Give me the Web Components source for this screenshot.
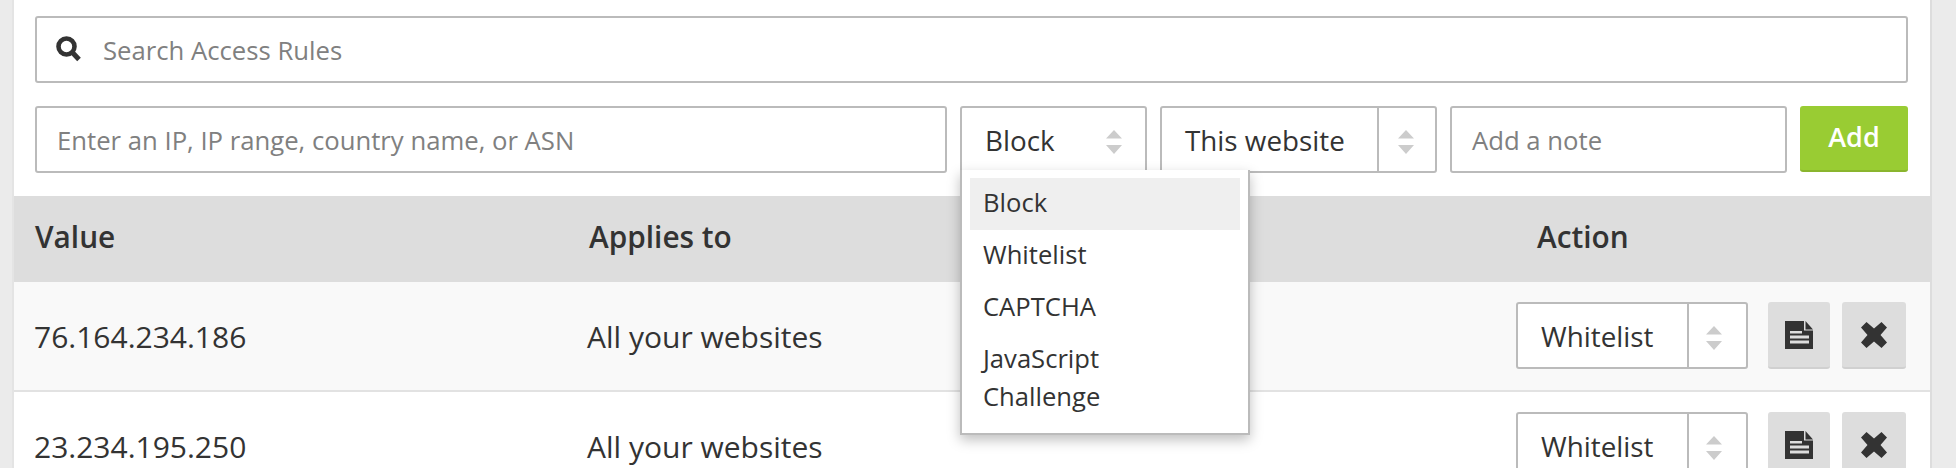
<!DOCTYPE html>
<html lang="en">
<head>
<meta charset="UTF-8">
<title>Access Rules</title>
<style>
  html, body { margin: 0; padding: 0; height: 468px; overflow: hidden; background: #ebebeb; }
  body { font-family: "Open Sans", "Liberation Sans", sans-serif; color: #333; }
</style>
</head>
<body>
<rules-page></rules-page>

<template id="textBoxTpl">
  <style>
    :host { display: flex; align-items: center; box-sizing: border-box; height: 67px; background: #fff; border: 2px solid #bbb; border-radius: 3px; font-size: 25.7px; color: #808080; padding: 2px 0 0 20px; }
    :host([search]) { padding-left: 19px; }
    svg { width: 26px; height: 26px; margin: -4px 21px 0 0; display: none; }
    :host([search]) svg { display: block; }
  </style>
  <svg viewBox="0 0 26 26"><circle cx="10.5" cy="10.5" r="8" fill="none" stroke="#333" stroke-width="4.6"/><path d="M16 16l7 7.5" fill="none" stroke="#333" stroke-width="5"/></svg>
  <slot></slot>
</template>

<template id="selectBoxTpl">
  <style>
    :host { display: flex; box-sizing: border-box; height: 67px; background: #fff; border: 2px solid #bbb; border-radius: 3px; font-size: 27.8px; color: #333; --arrow-w: 63px; }
    :host([split]) { --arrow-w: 58px; }
    :host([small]) { --arrow-w: 59px; }
    .label { flex: 1; display: flex; align-items: center; padding-left: 23px; }
    .arrows { display: flex; align-items: center; justify-content: center; box-sizing: border-box; width: var(--arrow-w); padding: 5px 0 0; }
    :host([split]) .arrows { border-left: 2px solid #bbb; padding-right: 2px; }
    :host([small]) .arrows { padding-right: 7px; }
    svg { width: 16px; height: 24px; fill: #ccc; }
  </style>
  <div class="label"><slot></slot></div>
  <div class="arrows"><svg viewBox="0 0 16 24"><path d="M8 0l8 8.500H0zM0 15h16l-8 9z"/></svg></div>
</template>

<template id="dropMenuTpl">
  <style>
    :host { display: block; position: absolute; left: 0; top: 64px; width: 290px; box-sizing: border-box; background: #fff; border: 2px solid #bbb; border-top: 0; padding: 8px 8px 9px; box-shadow: 0 5px 12px rgba(0,0,0,.25); font-size: 25.6px; color: #333; z-index: 5; }
  </style>
  <slot></slot>
</template>

<template id="dropItemTpl">
  <style>
    :host { display: block; padding: 6px 40px 8px 13px; line-height: 38px; }
    :host([active]) { background: #efefef; }
  </style>
  <slot></slot>
</template>

<template id="iconBtnTpl">
  <style>
    :host { display: flex; align-items: center; justify-content: center; box-sizing: border-box; height: 67px; background: #ddd; border-bottom: 2px solid #d0d0d0; border-radius: 3px; }
  </style>
  <slot></slot>
</template>

<template id="ruleRowTpl">
  <style>
    :host { display: grid; grid-template-columns: 553px 929px 1fr; align-items: center; box-sizing: border-box; height: 110px; padding: 0 24px 0 20px; border-bottom: 2px solid #e2e2e2; font-size: 30px; color: #333; }
    :host([shade]) { background: #f9f9f9; }
    .acts { display: flex; gap: 12px; margin-top: -1px; }
    select-box { width: 232px; margin-right: 8px; }
    icon-btn { width: 62px; }
    icon-btn + icon-btn { width: 64px; }
  </style>
  <div><slot name="value"></slot></div>
  <div><slot name="applies"></slot></div>
  <div class="acts">
    <select-box split small>Whitelist</select-box>
    <icon-btn><svg viewBox="0 0 28 28" width="28" height="28" fill="#333"><path fill-rule="evenodd" d="M0 0h19v9.500h9V28H0zM5 10v2.500h12V10zM5 14.500v3h19v-3zM5 19.500v3h19v-3z"/><path d="M20.500 0l7.500 8.500h-7.500z"/></svg></icon-btn>
    <icon-btn><svg viewBox="0 0 26 26" width="26" height="26" fill="#333"><path d="M5.500 0L13 6.500 20.500 0 26 5.500 19.500 13l6.500 7.500-5.500 5.500L13 19.500 5.500 26 0 20.500 6.500 13 0 5.500z"/></svg></icon-btn>
  </div>
</template>

<template id="tableHeadTpl">
  <style>
    :host { display: grid; grid-template-columns: 554px 948px 1fr; align-items: center; box-sizing: border-box; height: 86px; padding: 0 0 6px 21px; background: #ddd; font-size: 29.8px; font-weight: 600; color: #333; }
  </style>
  <slot></slot>
</template>

<template id="rulesPageTpl">
  <style>
    :host { display: block; box-sizing: border-box; width: 1920px; height: 468px; margin-left: 12px; background: #fff; border-left: 2px solid #e4e4e4; border-right: 2px solid #ddd; padding-top: 16px; }
    .bar { padding: 0 22px 0 21px; }
    .add { display: grid; grid-template-columns: 912px 187px 277px 337px 108px; column-gap: 13px; margin: 23px 0; }
    .add-btn { height: 66px; background: #9c3; border-bottom: 2px solid #8ab52e; box-sizing: border-box; border-radius: 3px; color: #fff; font-size: 27px; font-weight: 600; display: flex; align-items: center; justify-content: center; padding-bottom: 4px; }
    .block-wrap { position: relative; }
  </style>
  <div class="bar">
    <text-box search>Search Access Rules</text-box>
    <div class="add">
      <text-box>Enter an IP, IP range, country name, or ASN</text-box>
      <div class="block-wrap">
        <select-box>Block</select-box>
        <drop-menu>
          <drop-item active>Block</drop-item>
          <drop-item>Whitelist</drop-item>
          <drop-item>CAPTCHA</drop-item>
          <drop-item>JavaScript Challenge</drop-item>
        </drop-menu>
      </div>
      <select-box split>This website</select-box>
      <text-box>Add a note</text-box>
      <div class="add-btn">Add</div>
    </div>
  </div>
  <table-head><div>Value</div><div>Applies to</div><div>Action</div></table-head>
  <rule-row shade><span slot="value">76.164.234.186</span><span slot="applies">All your websites</span></rule-row>
  <rule-row><span slot="value">23.234.195.250</span><span slot="applies">All your websites</span></rule-row>
</template>

<script>
  // every element just clones its own template into an open shadow root
  function define(tag, tplId) {
    customElements.define(tag, class extends HTMLElement {
      constructor() {
        super();
        var content = document.getElementById(tplId).content.cloneNode(true);
        this.attachShadow({mode: 'open'}).appendChild(content);
      }
    });
  }
  define('text-box', 'textBoxTpl');
  define('select-box', 'selectBoxTpl');
  define('drop-menu', 'dropMenuTpl');
  define('drop-item', 'dropItemTpl');
  define('icon-btn', 'iconBtnTpl');
  define('rule-row', 'ruleRowTpl');
  define('table-head', 'tableHeadTpl');
  define('rules-page', 'rulesPageTpl');
</script>
</body>
</html>
